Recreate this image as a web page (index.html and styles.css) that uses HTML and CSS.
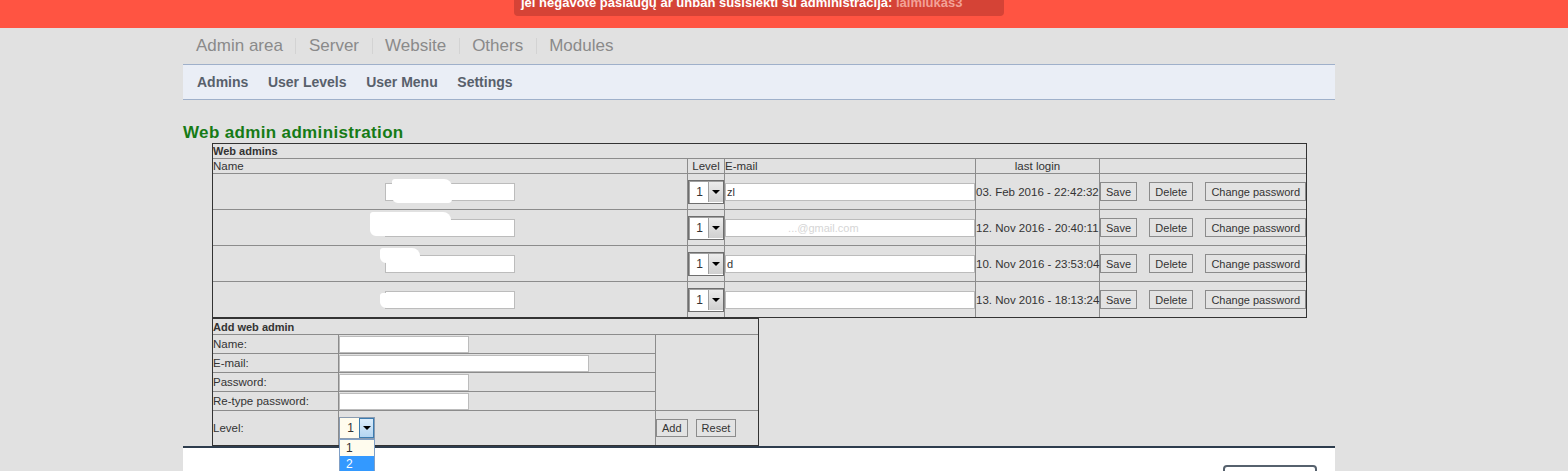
FILE: index.html
```html
<!DOCTYPE html>
<html lang="lt">

<head>
  <meta charset="UTF-8" />
  <meta name="viewport" content="width=device-width, initial-scale=1.0" />
  <title>Web admin administration</title>
  <link rel="stylesheet" href="styles.css">
</head>

<body>
  <!-- Notice -->
  <div class="notice-bar">
    <div class="notice">jei negavote paslaugų ar unban susisiekti su administracija: <span class="notice-nick">laimiukas3</span></div>
  </div>

  <div class="page">
    <!-- Main menu -->
    <nav class="topnav">
      <a>Admin area</a>
      <a>Server</a>
      <a>Website</a>
      <a>Others</a>
      <a>Modules</a>
    </nav>

    <nav class="subnav">
      <a>Admins</a>
      <a>User Levels</a>
      <a>User Menu</a>
      <a>Settings</a>
    </nav>

    <!-- Content -->
    <section class="content">
      <h1 class="title">Web admin administration</h1>

      <table class="grid admins">
        <colgroup>
          <col class="c-name">
          <col class="c-level">
          <col class="c-mail">
          <col class="c-login">
          <col class="c-actions">
        </colgroup>
        <tr class="row-cap">
          <td colspan="5" class="end cap">Web admins</td>
        </tr>
        <tr class="row-cap">
          <td>Name</td>
          <td class="center">Level</td>
          <td>E-mail</td>
          <td class="center">last login</td>
          <td class="end"></td>
        </tr>
        <tr class="row-admin">
          <td class="center"><span class="field"><input class="in in-name" type="text"><span class="blot blot-1"></span></span></td>
          <td><div class="sel"><span class="sel-val">1</span><span class="sel-btn"></span></div></td>
          <td><input class="in in-mail" type="text" value="zl"></td>
          <td class="login">03. Feb 2016 - 22:42:32</td>
          <td class="end"><div class="actions"><button class="btn">Save</button><button class="btn">Delete</button><button class="btn">Change password</button></div></td>
        </tr>
        <tr class="row-admin">
          <td class="center"><span class="field"><input class="in in-name" type="text"><span class="blot blot-2"></span></span></td>
          <td><div class="sel"><span class="sel-val">1</span><span class="sel-btn"></span></div></td>
          <td><input class="in in-mail in-faint" type="text" value="                    ...@gmail.com"></td>
          <td class="login">12. Nov 2016 - 20:40:11</td>
          <td class="end"><div class="actions"><button class="btn">Save</button><button class="btn">Delete</button><button class="btn">Change password</button></div></td>
        </tr>
        <tr class="row-admin">
          <td class="center"><span class="field"><input class="in in-name" type="text"><span class="blot blot-3"></span></span></td>
          <td><div class="sel"><span class="sel-val">1</span><span class="sel-btn"></span></div></td>
          <td><input class="in in-mail" type="text" value="d"></td>
          <td class="login">10. Nov 2016 - 23:53:04</td>
          <td class="end"><div class="actions"><button class="btn">Save</button><button class="btn">Delete</button><button class="btn">Change password</button></div></td>
        </tr>
        <tr class="row-admin last">
          <td class="center"><span class="field"><input class="in in-name" type="text"><span class="blot blot-4"></span></span></td>
          <td><div class="sel"><span class="sel-val">1</span><span class="sel-btn"></span></div></td>
          <td><input class="in in-mail" type="text"></td>
          <td class="login">13. Nov 2016 - 18:13:24</td>
          <td class="end"><div class="actions"><button class="btn">Save</button><button class="btn">Delete</button><button class="btn">Change password</button></div></td>
        </tr>
      </table>

      <table class="grid add-admin">
        <colgroup>
          <col class="c-label">
          <col class="c-input">
          <col class="c-buttons">
        </colgroup>
        <tr class="row-cap2">
          <td colspan="3" class="end cap">Add web admin</td>
        </tr>
        <tr class="row-form">
          <td>Name:</td>
          <td><input class="in in-short" type="text"></td>
          <td rowspan="4" class="end"></td>
        </tr>
        <tr class="row-form">
          <td>E-mail:</td>
          <td><input class="in in-long" type="text"></td>
        </tr>
        <tr class="row-form">
          <td>Password:</td>
          <td><input class="in in-short" type="password"></td>
        </tr>
        <tr class="row-form">
          <td>Re-type password:</td>
          <td><input class="in in-short" type="password"></td>
        </tr>
        <tr class="row-level last">
          <td>Level:</td>
          <td>
            <div class="sel sel-open">
              <span class="sel-val">1</span><span class="sel-btn"></span>
              <ul class="sel-list">
                <li>1</li>
                <li class="picked">2</li>
              </ul>
            </div>
          </td>
          <td class="end"><button class="btn btn-add">Add</button><button class="btn btn-reset">Reset</button></td>
        </tr>
      </table>
    </section>

    <footer class="footer">
      <button class="footer-btn"></button>
    </footer>
  </div>
</body>

</html>
```

FILE: styles.css
```css
* {
  box-sizing: border-box;
  margin: 0;
  padding: 0;
}

html,
body {
  background-color: #e1e1e1;
  font-family: 'Liberation Sans', Arial, sans-serif;
  color: #333;
  overflow: hidden;
}

/* notice on top */
.notice-bar {
  background-color: #ff5442;
  height: 28px;
  padding-left: 514px;
}

.notice {
  width: 490px;
  height: 16px;
  padding-left: 7px;
  background-color: #d54336;
  border-radius: 0 0 4px 4px;
  color: #fff;
  font-size: 13px;
  font-weight: bold;
  line-height: 6px;
  white-space: nowrap;
  overflow: hidden;
}

.notice-nick {
  color: #f3a197;
}

.page {
  width: 1152px;
  margin-left: 183px;
}

/* menus */
.topnav {
  height: 36px;
  display: flex;
  align-items: center;
}

.topnav a {
  font-size: 17px;
  line-height: 16px;
  color: #8a8a8a;
  padding: 0 12.5px;
  border-left: 1px solid #d3d3d3;
}

.topnav a:first-child {
  border-left: none;
  padding-left: 13px;
}

.subnav {
  height: 36px;
  background-color: #eaeef6;
  border-top: 1px solid #9fb0ca;
  border-bottom: 1px solid #9fb0ca;
  padding-left: 4px;
  display: flex;
  align-items: center;
}

.subnav a {
  font-size: 14px;
  font-weight: bold;
  color: #58606b;
  padding: 0 9.6px 0 10px;
}

/* content */
.title {
  font-size: 17px;
  line-height: 19px;
  font-weight: bold;
  letter-spacing: 0.35px;
  color: #167b16;
  margin: 23px 0 1px;
}

.grid {
  border-collapse: separate;
  border-spacing: 0;
  table-layout: fixed;
  margin-left: 29px;
  font-size: 11.5px;
  border: 1px solid #333;
}

.grid td {
  padding: 0;
  border-right: 1px solid #8c8c8c;
  border-bottom: 1px solid #8c8c8c;
  vertical-align: middle;
  white-space: nowrap;
  text-align: left;
}

.grid td.end {
  border-right: none;
}

.grid tr.last td {
  border-bottom: none;
}

.grid td.center {
  text-align: center;
}

.grid td.cap {
  font-weight: bold;
  font-size: 11px;
}

.admins {
  width: 1095px;
}

.c-name {
  width: 475px;
}

.c-level {
  width: 37px;
}

.c-mail {
  width: 251px;
}

.c-login {
  width: 124px;
}

.c-actions {
  width: 206px;
}

.row-cap {
  height: 15px;
}

.row-admin {
  height: 36px;
}

.row-admin.last {
  height: 35px;
}

.login {
  letter-spacing: 0;
}

.add-admin {
  width: 547px;
}

.c-label {
  width: 126px;
}

.c-input {
  width: 317px;
}

.c-buttons {
  width: 102px;
}

.row-cap2 {
  height: 16px;
}

.row-form {
  height: 19px;
}

.row-level {
  height: 34px;
}

/* inputs */
.in {
  display: block;
  height: 18px;
  border: 1px solid #bcbcbc;
  background-color: #fff;
  font-family: 'Liberation Sans', Arial, sans-serif;
  font-size: 11px;
  color: #333;
  padding: 0 1px;
  outline: none;
}

.in-faint {
  color: #d6d6d6;
}

.field {
  position: relative;
  display: inline-block;
  vertical-align: middle;
}

.in-name {
  width: 130px;
}

.in-mail {
  width: 250px;
}

.in-short {
  width: 130px;
  height: 17px;
}

.in-long {
  width: 250px;
  height: 17px;
}

/* white marks over hidden names */
.blot {
  position: absolute;
  background-color: #fff;
  border-radius: 3px 8px 4px 6px;
}

.blot-1 {
  left: 7px;
  top: -4px;
  width: 60px;
  height: 24px;
}

.blot-2 {
  left: -15px;
  top: -7px;
  width: 81px;
  height: 24px;
}

.blot-3 {
  left: -5px;
  top: -7px;
  width: 40px;
  height: 15px;
}

.blot-4 {
  left: -5px;
  top: 2px;
  width: 55px;
  height: 15px;
}

/* select boxes */
.sel {
  position: relative;
  display: flex;
  width: 36px;
  height: 24px;
  border: 1px solid #6e6e6e;
  box-shadow: inset 1px 1px 0 #a0a0a0;
  background-color: #fff;
  font-size: 12px;
}

.sel-val {
  flex: 1;
  text-align: center;
  line-height: 22px;
  padding-left: 2px;
}

.sel-btn {
  position: relative;
  width: 15px;
  margin: 1px 0 1px 0;
  background: linear-gradient(#ececec, #d0d0d0);
  border-left: 1px solid #a0a0a0;
}

.sel-btn::after {
  content: "";
  position: absolute;
  left: 3px;
  top: 8px;
  border-top: 4px solid #000;
  border-left: 4px solid transparent;
  border-right: 4px solid transparent;
}

.sel-open {
  height: 22px;
  border-color: #8a9bb0;
  box-shadow: none;
  background-color: #fffcee;
}

.sel-open .sel-val {
  line-height: 20px;
}

.sel-open .sel-btn {
  margin: 0;
  background: linear-gradient(#dcedfb, #b4d5f1);
  border: 1px solid #3c7cb0;
}

.sel-open .sel-btn::after {
  top: 7px;
  left: 3px;
}

.sel-list {
  position: absolute;
  top: 21px;
  left: -1px;
  width: 36px;
  list-style: none;
  background-color: #fffcee;
  border: 1px solid #7f9fc6;
  z-index: 5;
}

.sel-list li {
  height: 16px;
  line-height: 16px;
  padding-left: 6px;
}

.sel-list li.picked {
  background-color: #3399ff;
  color: #fff;
}

/* buttons */
.actions {
  display: flex;
  justify-content: space-between;
}

.btn {
  height: 19px;
  padding: 0 5px;
  background-color: #e3e3e3;
  border: 1px solid #8b8b8b;
  font-family: 'Liberation Sans', Arial, sans-serif;
  font-size: 11px;
  color: #333;
}

.btn-add,
.btn-reset {
  height: 18px;
}

.btn-reset {
  margin-left: 8px;
}

/* bottom */
.footer {
  height: 25px;
  overflow: hidden;
  background-color: #fff;
  border-top: 2px solid #2e3d4e;
  display: flex;
  justify-content: flex-end;
  align-items: flex-start;
  padding: 17px 18px 0 0;
}

.footer-btn {
  flex-shrink: 0;
  width: 94px;
  height: 30px;
  background-color: #fff;
  border: 2px solid #56616d;
  border-radius: 4px;
}
```
